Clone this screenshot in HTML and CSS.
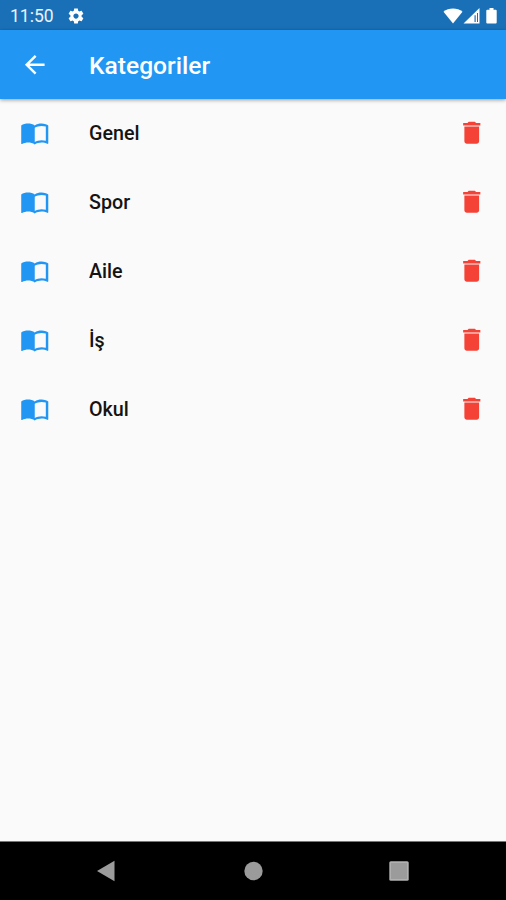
FILE: index.html
```html
<!DOCTYPE html>
<html lang="tr">
<head>
<meta charset="utf-8">
<title>Kategoriler</title>
<link rel="stylesheet" href="styles.css">
</head>
<body>
<svg class="defs" aria-hidden="true">
  <symbol id="book" viewBox="0 0 24 24"><path d="M21 5c-1.110-.35-2.330-.5-3.500-.5-1.950 0-4.050.4-5.500 1.500-1.450-1.100-3.550-1.500-5.500-1.500S2.450 4.900 1 6v14.650c0 .25.25.5.5.5.1 0 .15-.05.25-.05C3.100 20.450 5.050 20 6.500 20c1.950 0 4.050.4 5.500 1.500 1.350-.85 3.800-1.500 5.500-1.500 1.650 0 3.350.3 4.750 1.050.1.05.15.05.25.05.25 0 .5-.25.5-.5V6c-.6-.45-1.250-.75-2-1zm0 13.500c-1.100-.35-2.300-.5-3.500-.5-1.700 0-4.150.65-5.500 1.500V8c1.350-.85 3.800-1.500 5.500-1.500 1.200 0 2.400.15 3.500.5v11.500z"/></symbol>
  <symbol id="trash" viewBox="0 0 24 24"><path d="M6 19c0 1.100.9 2 2 2h8c1.100 0 2-.9 2-2V7H6v12zM19 4h-3.500l-1-1h-5l-1 1H5v2h14V4z"/></symbol>
</svg>
<div class="screen">
  <div class="status">
    <span class="time">11:50</span>
    <svg class="gear" viewBox="0 0 24 24"><path d="M19.43 12.98c.04-.32.07-.64.07-.98s-.03-.66-.07-.98l2.11-1.65c.19-.15.24-.42.12-.64l-2-3.46c-.12-.22-.39-.3-.61-.22l-2.49 1c-.52-.4-1.08-.73-1.69-.98l-.38-2.65C14.46 2.18 14.25 2 14 2h-4c-.25 0-.46.18-.49.42l-.38 2.65c-.61.25-1.17.59-1.69.98l-2.49-1c-.23-.09-.49 0-.61.22l-2 3.46c-.13.22-.07.49.12.64l2.11 1.65c-.04.32-.07.65-.07.98s.03.66.07.98l-2.11 1.65c-.19.15-.24.42-.12.64l2 3.46c.12.22.39.3.61.22l2.49-1c.52.4 1.08.73 1.69.98l.38 2.65c.03.24.24.42.49.42h4c.25 0 .46-.18.49-.42l.38-2.65c.61-.25 1.17-.59 1.69-.98l2.49 1c.23.09.49 0 .61-.22l2-3.46c.12-.22.07-.49-.12-.64l-2.11-1.65zM12 15.5c-1.93 0-3.5-1.57-3.5-3.5s1.57-3.5 3.5-3.5 3.5 1.57 3.5 3.5-1.57 3.5-3.5 3.5z"/></svg>
    <svg class="signals" viewBox="0 0 56 18">
      <path d="M.5 4.8C5.6.4 14.4.4 19.5 4.8L10 16.500z"/>
      <path fill-rule="evenodd" d="M20.500 16.500 36.500 1v15.500zM31.500 8.200v6.800h1.200V8.200zM34 6v9h1V6z"/>
      <path d="M46.500 1h4v1.700h2.200q1 0 1 1v11.800q0 1-1 1h-8.400q-1 0-1-1V3.700q0-1 1-1h2.200z"/>
    </svg>
  </div>
  <header class="appbar">
    <svg class="icon" viewBox="0 0 24 24"><path d="M20 11H7.830l5.590-5.590L12 4l-8 8 8 8 1.410-1.410L7.830 13H20v-2z"/></svg>
    <h1>Kategoriler</h1>
  </header>
  <ul class="list">
    <li><svg class="icon book"><use href="#book"/></svg><span>Genel</span><svg class="icon trash"><use href="#trash"/></svg></li>
    <li><svg class="icon book"><use href="#book"/></svg><span>Spor</span><svg class="icon trash"><use href="#trash"/></svg></li>
    <li><svg class="icon book"><use href="#book"/></svg><span>Aile</span><svg class="icon trash"><use href="#trash"/></svg></li>
    <li><svg class="icon book"><use href="#book"/></svg><span>İş</span><svg class="icon trash"><use href="#trash"/></svg></li>
    <li><svg class="icon book"><use href="#book"/></svg><span>Okul</span><svg class="icon trash"><use href="#trash"/></svg></li>
  </ul>
  <nav class="navbar">
    <svg viewBox="0 0 22 22"><path d="M1 11 18.500 .8v20.400z"/></svg>
    <svg viewBox="0 0 22 22"><circle cx="11.500" cy="11" r="9.200"/></svg>
    <svg viewBox="0 0 22 22"><rect x="1.300" y="1.300" width="19.400" height="19.400" rx="1.500" fill="#b0b0b0"/><rect x="3" y="3" width="16" height="16"/></svg>
  </nav>
</div>
</body>
</html>
```
FILE: styles.css
```css
* { box-sizing: border-box; }
body { margin: 0; font-family: Roboto, sans-serif; }
.defs { display: none; }
.screen {
  height: 900px;
  display: flex;
  flex-direction: column;
  background: #fafafa;
}
.status {
  height: 30px;
  flex: none;
  display: flex;
  align-items: center;
  padding: 2px 7px 0 10px;
  background: #1a70b7;
  color: #e9f2fa;
  fill: #fff;
}
.time { width: 57px; font-size: 17.500px; line-height: 20px; }
.gear { width: 18px; height: 18px; }
.signals { width: 56px; height: 18px; margin-left: auto; }
.appbar {
  height: 68.500px;
  flex: none;
  display: flex;
  align-items: center;
  padding-left: 20px;
  background: #2196f3;
  color: #fff;
  fill: #fff;
  box-shadow: 0 1px 4px rgba(0, 0, 0, .4);
}
.icon { width: 29.500px; height: 29.500px; flex: none; }
h1 {
  margin: 4px 0 0 39.500px;
  font-size: 24.600px;
  line-height: 30px;
  font-weight: 500;
}
.list { flex: 1; margin: 0; padding: 0; list-style: none; }
.list li {
  height: 69px;
  display: flex;
  align-items: center;
  padding: 0 19.500px 0 20px;
}
.list span {
  flex: 1;
  margin: 2px 0 0 39.500px;
  font-size: 19.700px;
  line-height: 24px;
  font-weight: 500;
  color: #141414;
}
.book { fill: #2196f3; }
.trash { fill: #f44336; }
.navbar {
  height: 59px;
  flex: none;
  display: flex;
  justify-content: space-between;
  align-items: center;
  padding: 0 96px;
  border-top: 1px solid #777;
  background: #000;
  fill: #9b9b9b;
}
.navbar svg { width: 22px; height: 22px; }
```
